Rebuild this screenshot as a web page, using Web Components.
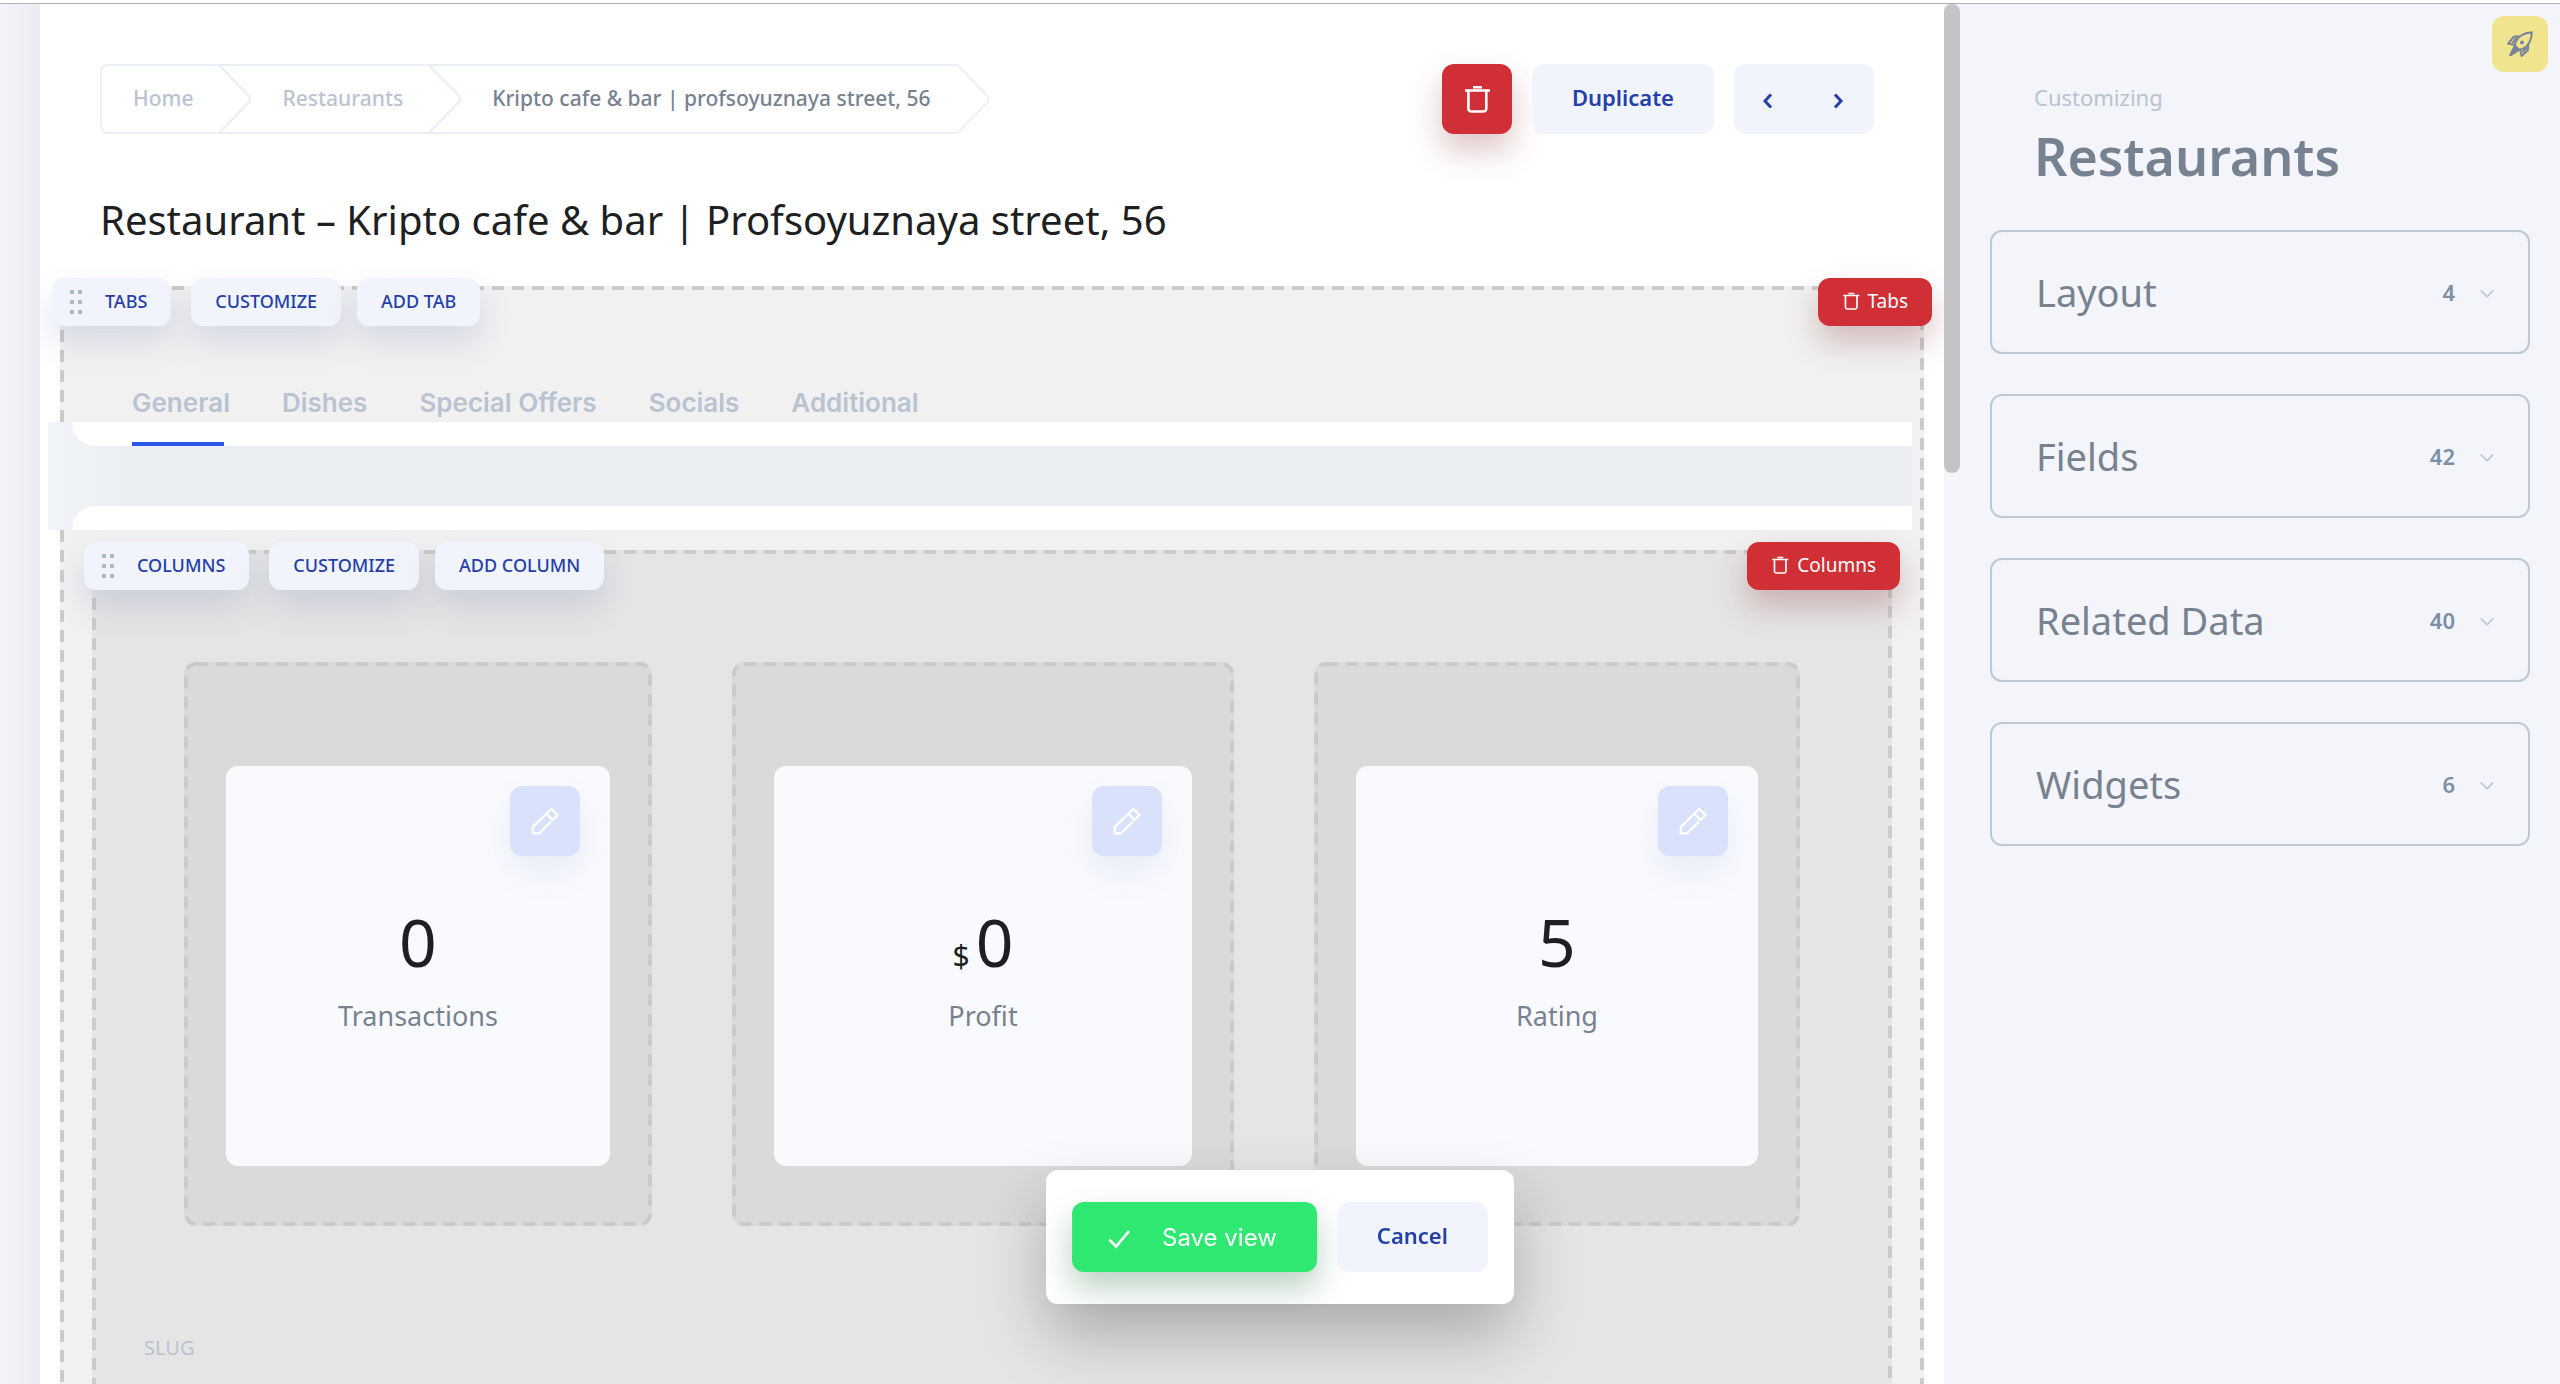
<!DOCTYPE html>
<html lang="en">
<head>
<meta charset="utf-8">
<title>Restaurants – view editor</title>
<style>
  html, body { margin: 0; height: 100%; }
  body {
    --ink: #1d1f22;
    --slate: #778291;
    --mist: #b9c3d1;
    --blue: #2540a8;
    --accent: #2b57e8;
    --danger: #d03035;
    --pale: #f1f4fc;
    --side: #f3f5fa;
    --dash: #cbcbcb;
    font-family: "Noto Sans", "Open Sans", sans-serif;
    color: var(--ink);
    background: #fff;
    overflow: hidden;
  }
</style>
</head>
<body>

<admin-shell>
  <page-header slot="main">
    <bread-crumbs slot="crumbs">
      <crumb-item>Home</crumb-item>
      <crumb-item>Restaurants</crumb-item>
      <crumb-item current>Kripto cafe &amp; bar | profsoyuznaya street, 56</crumb-item>
    </bread-crumbs>
    <ui-button slot="actions" variant="danger" size="square" label="Delete"><ui-icon name="trash" size="28"></ui-icon></ui-button>
    <ui-button slot="actions" variant="pale" size="large">Duplicate</ui-button>
    <record-pager slot="actions"></record-pager>
    <span slot="title">Restaurant – Kripto cafe &amp; bar | Profsoyuznaya street, 56</span>
  </page-header>

  <drop-zone slot="main" level="1" name="Tabs">
    <zone-tools slot="tools" name="Tabs" add="Add tab"></zone-tools>
    <tab-strip>
      <tab-item active>General</tab-item>
      <tab-item>Dishes</tab-item>
      <tab-item>Special Offers</tab-item>
      <tab-item>Socials</tab-item>
      <tab-item>Additional</tab-item>
    </tab-strip>
    <drop-zone level="2" name="Columns">
      <zone-tools slot="tools" name="Columns" add="Add column"></zone-tools>
      <column-row>
        <drop-zone level="3"><metric-card label="Transactions">0</metric-card></drop-zone>
        <drop-zone level="3"><metric-card label="Profit" unit="$">0</metric-card></drop-zone>
        <drop-zone level="3"><metric-card label="Rating">5</metric-card></drop-zone>
      </column-row>
      <field-caption>SLUG</field-caption>
    </drop-zone>
  </drop-zone>

  <side-panel slot="side" caption="Customizing" heading="Restaurants">
    <panel-group count="4">Layout</panel-group>
    <panel-group count="42">Fields</panel-group>
    <panel-group count="40">Related Data</panel-group>
    <panel-group count="6">Widgets</panel-group>
  </side-panel>
</admin-shell>

<save-bar>
  <ui-button variant="success" size="large"><ui-icon name="check" size="22"></ui-icon>Save view</ui-button>
  <ui-button variant="pale" size="large">Cancel</ui-button>
</save-bar>

<script>
  const define = (name, render) => customElements.define(name, class extends HTMLElement {
    connectedCallback() {
      if (this.shadowRoot) return;
      const template = document.createElement('template');
      template.innerHTML = render(this);
      this.attachShadow({ mode: 'open' }).append(template.content.cloneNode(true));
    }
  });

  const ICONS = {
    trash: ['0 0 28 28', `<g fill="none" stroke="currentColor" stroke-width="2.6" stroke-linejoin="round">
      <path d="M2 5.5h25M10 2.3h9"/><path d="M5.4 6v17.5a3 3 0 0 0 3 3h11.9a3 3 0 0 0 3-3V6"/></g>`],
    pencil: ['0 0 28 28', `<g fill="none" stroke="currentColor" stroke-width="2.2" stroke-linejoin="round">
      <path d="M20 14.5 8.2 26.3H1.7v-6.2L20.3 1.8l6.2 6.2-5 5-6-6.2"/></g>`],
    check: ['0 0 22 22', `<path d="M1.2 12.6 8 19.500 21 4.200" fill="none" stroke="currentColor" stroke-width="2.6"/>`],
    prev: ['0 0 12 16', `<path d="M9 1.5 3 8l6 6.5" fill="none" stroke="currentColor" stroke-width="3"/>`],
    next: ['0 0 12 16', `<path d="M3 1.5 9 8l-6 6.5" fill="none" stroke="currentColor" stroke-width="3"/>`],
    down: ['0 0 14 14', `<path d="M.8 5.500 7 11.700 13.200 5.500" fill="none" stroke="currentColor" stroke-width="1.600"/>`],
    rocket: ['0 0 26 26', `<g fill="none" stroke="currentColor" stroke-width="2" stroke-linejoin="round">
      <path d="M24.8 1.2C17 1.8 11.400 4.400 8.600 11.200L8 14.600l4 4.200 3.600-.8C21.800 14.800 24.600 9 24.800 1.200z"/>
      <path d="M12.400 5.200 6.600 5.800 1.200 12.600l6.800 1.400M21.400 13.400l-.6 6L14.600 25l-1.600-6.400M9.200 6.800 5.400 12M19.600 17l-4.200 4.200"/></g>
      <circle cx="15" cy="11.400" r="1.900" fill="currentColor"/>
      <path d="M7.400 14.200 2.600 24.400 4.200 24.600l8.200-5.400z" fill="currentColor" stroke="currentColor"/>`]
  };

  define('ui-icon', el => {
    const [box, art] = ICONS[el.getAttribute('name')];
    const size = el.getAttribute('size') || 24;
    return `<style>:host{display:inline-flex;flex:none}svg{display:block;height:${size}px}</style>
      <svg viewBox="${box}" aria-hidden="true">${art}</svg>`;
  });

  define('admin-shell', () => `
    <style>
      :host { display: grid; grid-template-columns: 40px minmax(0, 1fr) 16px 600px; grid-template-rows: minmax(0, 1fr);
        height: 100vh; box-sizing: border-box; padding-top: 3px; overflow: hidden; }
      :host > * { border-top: 1px solid #b0b1b8; min-height: 0; }
      .rail, main, .track, aside { border-top: 1px solid #b0b1b8; min-height: 0; }
      .rail { background: linear-gradient(90deg, #f3f5fa, #ebecf1); }
      main { display: flex; flex-direction: column; padding: 0 20px; background: #fff; overflow: hidden; }
      .track, aside { background: var(--side); }
      .thumb { height: 34%; border-radius: 8px; background: #c3c4c6; }
    </style>
    <div class="rail"></div>
    <main><slot name="main"></slot></main>
    <div class="track"><div class="thumb"></div></div>
    <aside><slot name="side"></slot></aside>`);

  define('page-header', () => `
    <style>
      :host { display: block; flex: none; padding: 60px 50px 38px 40px; }
      .bar { display: flex; justify-content: space-between; height: 70px; }
      .actions { display: flex; gap: 20px; }
      h1 { margin: 58px 0 0; font-size: 40px; font-weight: 400; line-height: 56px; }
    </style>
    <div class="bar"><slot name="crumbs"></slot><div class="actions"><slot name="actions"></slot></div></div>
    <h1><slot name="title"></slot></h1>`);

  define('bread-crumbs', () => `
    <style>
      :host { display: block; }
      nav { display: flex; height: 70px; color: #ebeff7; }
      .list { display: flex; box-sizing: border-box; border: 2px solid; border-right: 0; border-radius: 8px 0 0 8px; }
      svg { display: block; width: 34px; height: 70px; }
    </style>
    <nav aria-label="Breadcrumb"><div class="list"><slot></slot></div>
      <svg viewBox="0 0 34 70" aria-hidden="true"><path d="M0 1Q1.500 1 2.500 3L31 32.500Q32 35 31 37.500L2.500 67Q1.500 69 0 69" fill="none" stroke="currentColor" stroke-width="2"/></svg></nav>`);

  define('crumb-item', el => {
    const current = el.hasAttribute('current');
    return `<style>
      :host { display: flex; align-items: center; }
      a { padding: 0 26px 2px 31px; font-size: 21px; line-height: 28px; font-weight: 500; text-decoration: none;
        white-space: nowrap; color: var(${current ? '--slate' : '--mist'}); }
      svg { display: block; width: 32px; height: 66px; color: #ebeff7; }
    </style>
    <a href="#"${current ? ' aria-current="page"' : ''}><slot></slot></a>
    ${current ? '' : '<svg viewBox="0 0 32 66" aria-hidden="true"><path d="M.8 0 30.500 30.500Q31.500 33 30.500 35.500L.8 66" fill="none" stroke="currentColor" stroke-width="2.400"/></svg>'}`;
  });

  define('ui-button', el => {
    const label = el.getAttribute('label');
    return `<style>
      :host { display: block; flex: none; }
      button { display: flex; align-items: center; justify-content: center; gap: 8px; width: 100%; box-sizing: border-box; margin: 0; border: 0;
        border-radius: 12px; font: 500 18px/26px "Noto Sans", sans-serif; white-space: nowrap; cursor: pointer; }
      :host([size="large"]) button { height: 70px; padding: 0 40px 4px; font-size: 22px; font-weight: 600; }
      :host([size="square"]) button { width: 70px; height: 70px; padding: 0; }
      :host([size="small"]) button { height: 48px; padding: 0 24px 2px; }
      :host([variant="pale"]) button { background: var(--pale); color: var(--blue); }
      :host([variant="pale"][size="small"]) button { text-transform: uppercase; box-shadow: 0 16px 32px rgba(60, 80, 150, .15); }
      :host([variant="danger"]) button { background: var(--danger); color: #fff; box-shadow: 0 16px 32px rgba(120, 20, 24, .25); }
      :host([variant="danger"][size="small"]) button { font-size: 19px; font-weight: 400; }
      :host([variant="soft"]) button { background: #dae1fa; color: #fff; box-shadow: 0 16px 32px rgba(90, 120, 200, .1); }
      :host([variant="success"]) button { background: #2ee872; color: #fff; gap: 32px; padding: 2px 40px 0 36px;
        font-family: Inter, sans-serif; font-size: 24px; font-weight: 400; box-shadow: 0 16px 32px rgba(10, 90, 40, .28); }
    </style>
    <button type="button"${label ? ` aria-label="${label}"` : ''}><slot></slot></button>`;
  });

  define('record-pager', () => `
    <style>
      :host { display: flex; border-radius: 12px; background: var(--pale); }
      button { display: flex; align-items: center; justify-content: center; width: 70px; border: 0; padding: 3px 2px 0 0; background: none; color: var(--blue); cursor: pointer; }
    </style>
    <button type="button" aria-label="Previous"><ui-icon name="prev" size="16"></ui-icon></button>
    <button type="button" aria-label="Next"><ui-icon name="next" size="16"></ui-icon></button>`);

  define('drop-zone', () => `
    <style>
      :host { display: grid; grid-template: minmax(0, 1fr) / minmax(0, 1fr); position: relative; flex: none; box-sizing: border-box; }
      svg, .body { grid-area: 1 / 1; }
      svg { display: block; width: 0; min-width: 100%; height: 0; min-height: 100%; }
      rect { x: 2px; y: 2px; width: calc(100% - 4px); height: calc(100% - 4px); fill: none; stroke: var(--dash);
        stroke-width: 4px; stroke-dasharray: 12 8; stroke-dashoffset: -10; }
      .body { min-width: 0; }
      :host([level="1"]) { background: #f1f1f1; }
      :host([level="1"]) .body { padding: 100px 4px 40px; }
      :host([level="2"]) { background: #e5e5e5; margin: 20px 28px 0; }
      :host([level="2"]) .body { padding: 112px 4px 40px; }
      :host([level="3"]) { background: #dadada; border-radius: 12px; }
      :host([level="3"]) .body { padding: 104px 42px 60px; }
      :host([level="3"]) rect { rx: 10px; stroke-dashoffset: 0; }
    </style>
    <svg aria-hidden="true"><rect/></svg>
    <div class="body"><slot></slot></div>
    <slot name="tools"></slot>`);

  define('zone-tools', el => {
    const name = el.getAttribute('name');
    return `<style>
      :host { position: absolute; top: -8px; left: -8px; right: -8px; display: flex; }
      .move { margin-right: 20px; }
      .add { margin-left: 16px; }
      .remove { margin-left: auto; }
      .dots { display: grid; grid-template-columns: 4px 4px; gap: 6px 4px; margin: 2px 15px 0 -6px; }
      .dots i { width: 4px; height: 4px; background: #b1b9c9; }
    </style>
    <ui-button class="move" variant="pale" size="small"><span class="dots">${'<i></i>'.repeat(6)}</span>${name}</ui-button>
    <ui-button variant="pale" size="small">Customize</ui-button>
    <ui-button class="add" variant="pale" size="small">${el.getAttribute('add')}</ui-button>
    <ui-button class="remove" variant="danger" size="small"><ui-icon name="trash" size="18"></ui-icon>${name}</ui-button>`;
  });

  define('tab-strip', () => `
    <style>
      :host { display: block; }
      .tabs { display: flex; gap: 52px; padding-left: 68px; position: relative; z-index: 1; }
      .divider { display: flex; flex-direction: column; margin: -24px 8px 0 -16px;
        background: linear-gradient(90deg, #f0f3f7, #eceff3 72px, #eaedf1 72px); }
      .edge { height: 24px; margin-left: 24px; background: #fff; }
      .edge:first-child { border-bottom-left-radius: 24px; }
      .edge:last-child { margin-top: 60px; border-top-left-radius: 24px; }
    </style>
    <div class="tabs" role="tablist"><slot></slot></div>
    <div class="divider"><div class="edge"></div><div class="edge"></div></div>`);

  define('tab-item', el => `
    <style>
      :host { display: block; }
      button { height: 60px; border: 0; padding: 0 0 26px; background: none; color: var(--mist);
        font: 600 26px/34px Inter, sans-serif; white-space: nowrap; cursor: pointer; }
      :host([active]) button { background: linear-gradient(var(--accent), var(--accent)) left bottom / 92px 4px no-repeat; }
    </style>
    <button type="button" role="tab" aria-selected="${el.hasAttribute('active')}"><slot></slot></button>`);

  define('column-row', () => `
    <style>
      :host { display: grid; grid-template-columns: minmax(0, 468fr) minmax(0, 502fr) minmax(0, 486fr); gap: 80px; padding: 0 88px; }
    </style><slot></slot>`);

  define('metric-card', el => `
    <style>
      :host { display: flex; flex-direction: column; align-items: center; height: 400px; box-sizing: border-box; padding: 20px 30px;
        border-radius: 12px; background: #f9fafd; }
      ui-button { align-self: flex-end; }
      .value { display: flex; align-items: baseline; gap: 6px; margin-top: 45px; font-size: 66px; line-height: 80px; }
      .unit { font-size: 30px; line-height: 40px; }
      .label { margin-top: 17px; font-size: 27px; line-height: 36px; color: var(--slate); }
    </style>
    <ui-button variant="soft" size="square" label="Edit ${el.getAttribute('label')}"><ui-icon name="pencil" size="28"></ui-icon></ui-button>
    <div class="value">${el.hasAttribute('unit') ? `<span class="unit">${el.getAttribute('unit')}</span>` : ''}<span><slot></slot></span></div>
    <div class="label">${el.getAttribute('label')}</div>`);

  define('field-caption', () => `
    <style>:host { display: block; margin: 108px 48px 0; font-size: 20px; line-height: 28px; color: var(--mist); }</style><slot></slot>`);

  define('side-panel', el => `
    <style>
      :host { display: block; position: relative; padding: 77px 30px 0; }
      header { padding: 0 0 40px 44px; }
      p { margin: 0 0 9px; font-size: 22px; line-height: 32px; color: var(--mist); }
      h2 { margin: 0; font-size: 52px; line-height: 68px; font-weight: 600; color: var(--slate); }
      .groups { display: flex; flex-direction: column; gap: 40px; }
      .boost { position: absolute; top: 12px; right: 12px; display: flex; align-items: center; justify-content: center;
        width: 56px; height: 56px; border: 0; padding: 0; border-radius: 12px; background: #f1e48e; color: #78839a; cursor: pointer; }
    </style>
    <header><p>${el.getAttribute('caption')}</p><h2>${el.getAttribute('heading')}</h2></header>
    <div class="groups"><slot></slot></div>
    <button class="boost" type="button" aria-label="Quick start"><ui-icon name="rocket" size="26"></ui-icon></button>`);

  define('panel-group', el => `
    <style>
      :host { display: block; }
      button { display: flex; align-items: center; width: 100%; height: 124px; box-sizing: border-box; padding: 0 34px 0 44px;
        border: 2px solid #bcc8d4; border-radius: 12px; background: none; color: var(--slate);
        font: 400 38px/52px "Noto Sans", sans-serif; text-align: left; cursor: pointer; }
      .count { margin: 0 25px 0 auto; font-size: 22px; font-weight: 600; color: #7b8fa5; }
      ui-icon { color: #b9c3cd; }
    </style>
    <button type="button" aria-expanded="false"><span><slot></slot></span><span class="count">${el.getAttribute('count')}</span><ui-icon name="down" size="14"></ui-icon></button>`);

  define('save-bar', () => `
    <style>
      :host { position: fixed; left: 50%; bottom: 80px; transform: translateX(-50%); display: flex; gap: 20px; padding: 32px 26px;
        border-radius: 12px; background: #fff; box-shadow: 0 32px 64px rgba(0, 0, 0, .25); }
    </style><slot></slot>`);
</script>
</body>
</html>
